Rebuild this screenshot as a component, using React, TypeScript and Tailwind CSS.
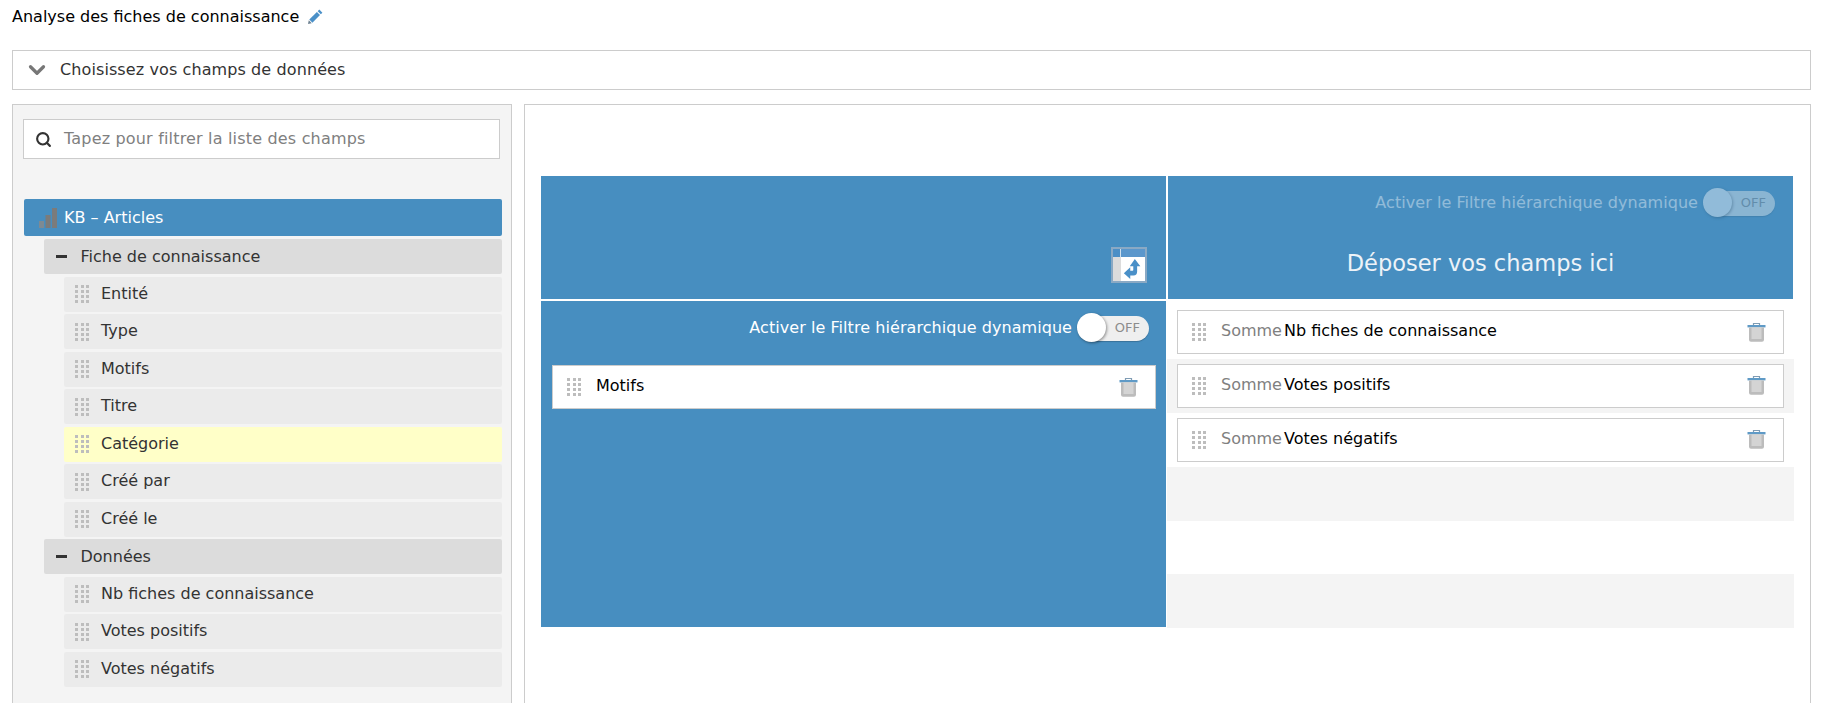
import { Search, ChevronDown } from "lucide-react";

const font = "font-['DejaVu_Sans',sans-serif]";

function Handle() {
  return (
    <div className="grid w-[14px] shrink-0 grid-cols-3 gap-x-[2.5px] gap-y-[2px]">
      {Array.from({ length: 12 }).map((_, i) => (
        <span key={i} className="h-[3px] w-[3px] bg-[#bdbdbd]" />
      ))}
    </div>
  );
}

function Trash() {
  return (
    <svg width="19" height="19" viewBox="0 0 19 19" className="shrink-0">
      <path d="M6.5 2.5V0.5h6v2" fill="none" stroke="#7f9cb4" strokeWidth="1.2" />
      <rect x="0.5" y="2" width="18" height="2.4" fill="#5f9ac6" />
      <path d="M2 4.4h15v12.4a2 2 0 0 1-2 2H4a2 2 0 0 1-2-2z" fill="#bcbcbc" />
      <rect x="4.5" y="4.4" width="10" height="11.6" fill="#d4d4d4" />
    </svg>
  );
}

function Toggle({ dim }: { dim?: boolean }) {
  return (
    <div className={`relative h-[25px] w-[71px] shrink-0 rounded-full bg-[#efefef] shadow-[0_1px_1px_rgba(0,0,0,0.2)] ${dim ? "opacity-40" : ""}`}>
      <span className="absolute right-[9px] top-[3px] text-[13px] leading-[18px] text-[#8c8c8c]">OFF</span>
      <span className="absolute -left-px -top-[3px] h-[29px] w-[29px] rounded-full bg-white shadow-[1px_1px_3px_rgba(0,0,0,0.4)]" />
    </div>
  );
}

function FilterSwitch({ dim }: { dim?: boolean }) {
  return (
    <div className="flex items-center justify-end gap-[6px]">
      <span className={`-mt-[2px] text-[16px] tracking-[0.06px] text-white ${dim ? "opacity-40" : ""}`}>Activer le Filtre hiérarchique dynamique</span>
      <Toggle dim={dim} />
    </div>
  );
}

function TreeItem({ label, highlight }: { label: string; highlight?: boolean }) {
  return (
    <div className={`mb-[2.5px] ml-[40px] flex h-[35px] items-center gap-[12px] rounded-[2px] pl-[11px] text-[16px] text-[#333] ${highlight ? "bg-[#ffffc8]" : "bg-[#ebebeb]"}`}>
      <Handle />
      <span className="-mt-px">{label}</span>
    </div>
  );
}

function TreeGroup({ label }: { label: string }) {
  return (
    <div className="mb-[2.5px] ml-[20px] flex h-[35px] items-center rounded-[2px] bg-[#dcdcdc] pl-[12px] text-[16px] text-[#333]">
      <span className="h-[3px] w-[11px] bg-[#333]" />
      <span className="ml-[13.5px]">{label}</span>
    </div>
  );
}

function Measure({ prefix, label }: { prefix?: string; label: string }) {
  return (
    <div className="flex h-[44px] items-center border border-[#ccc] bg-white pl-[14px] pr-[17px] text-[16px] text-black">
      <Handle />
      <span className="ml-[15px] -mt-[2px] flex-1">
        {prefix && <span className="mr-[2px] text-[#808080]">{prefix}</span>}
        {label}
      </span>
      <Trash />
    </div>
  );
}

function PivotIcon() {
  return (
    <div className="ml-auto flex h-[36px] w-[36px] flex-col border-2 border-[#8aa9c4] bg-white">
      <div className="flex h-[8px]">
        <span className="w-[7px] bg-[#4c8fc6]" />
        <span className="w-px bg-[#cfe0ee]" />
        <span className="flex-1 bg-[#5b97cc]" />
      </div>
      <div className="flex flex-1">
        <span className="w-[8px] bg-[#dcdcdc]" />
        <svg viewBox="0 0 24 24" className="flex-1 p-[1px]">
          <path d="M14 1l6 8h-3.5v6a4 4 0 0 1-4 4H9v4l-7-6.5L9 10v4h2.5a.8.8 0 0 0 .8-.8V9H8.500z" fill="#4a90c8" />
        </svg>
      </div>
    </div>
  );
}

const fields = ["Entité", "Type", "Motifs", "Titre", "Catégorie", "Créé par", "Créé le"];
const data = ["Nb fiches de connaissance", "Votes positifs", "Votes négatifs"];

export default function App() {
  return (
    <div className={`h-[703px] overflow-hidden bg-white pl-[12px] pr-[11px] ${font}`}>
      <div className="flex h-[50px] items-start pt-[5px] text-[16px] text-black">
        <span>Analyse des fiches de connaissance</span>
        <svg width="15" height="15" viewBox="0 0 15 15" className="ml-[9px] mt-[4px]">
          <path d="M11.3 0.6l3.1 3.1-1.6 1.6-3.1-3.1z" fill="#4a90c8" />
          <path d="M8.9 3l3.1 3.1L4.4 13.7l-3.1-3.1z" fill="#4a90c8" />
          <path d="M0.8 11.3l2.9 2.9-3.7.8z" fill="#6b7f8f" />
        </svg>
      </div>

      <div className="flex h-[40px] items-center border border-[#ccc] pl-[11px] text-[16px] text-[#333]">
        <ChevronDown size={26} strokeWidth={3} className="text-[#777]" />
        <span className="ml-[10px] tracking-[0.1px]">Choisissez vos champs de données</span>
      </div>

      <div className="mt-[14px] flex gap-[12px]">
        <div className="h-[620px] w-[500px] shrink-0 border border-[#ccc] bg-[#f4f4f4] pl-[11px] pr-[9px] pt-[14px]">
          <div className="-ml-px mr-[2px] flex h-[40px] items-center border border-[#ccc] bg-white pl-[11px] text-[16px] text-[#808080]">
            <Search size={17} strokeWidth={3} className="text-[#333]" />
            <span className="ml-[12px] -mt-px tracking-[0.18px]">Tapez pour filtrer la liste des champs</span>
          </div>
          <div className="mt-[40px] mb-[3px] flex h-[37px] items-center rounded-[2px] bg-[#478ec0] pl-[15px] text-[16px] text-white">
            <svg width="18" height="20" viewBox="0 0 18 20">
              <rect x="0" y="13" width="5" height="7" fill="#7d8a93" />
              <rect x="6.5" y="7" width="5" height="13" fill="#7b7b7b" />
              <rect x="13" y="0" width="5" height="20" fill="#7b7b7b" />
            </svg>
            <span className="ml-[7px]">KB – Articles</span>
          </div>
          <TreeGroup label="Fiche de connaissance" />
          {fields.map((f) => (
            <TreeItem key={f} label={f} highlight={f === "Catégorie"} />
          ))}
          <TreeGroup label="Données" />
          {data.map((f) => (
            <TreeItem key={f} label={f} />
          ))}
        </div>

        <div className="h-[620px] flex-1 border border-[#ccc] pl-[16px] pt-[71px]">
          <div className="grid grid-cols-[625px_625px] grid-rows-[123px_326px] gap-[2px]">
            <div className="flex items-end bg-[#478ec0] pb-[16px] pr-[19px]">
              <PivotIcon />
            </div>
            <div className="flex flex-col bg-[#478ec0] pr-[18px] pt-[15px]">
              <FilterSwitch dim />
              <div className="mt-[31px] -mr-[18px] text-center text-[22.5px] text-[#edf3f8]">Déposer vos champs ici</div>
            </div>
            <div className="bg-[#478ec0] pl-[11px] pr-[10px] pt-[15px]">
              <div className="pr-[7px]">
                <FilterSwitch />
              </div>
              <div className="mt-[24px]">
                <Measure label="Motifs" />
              </div>
            </div>
            <div className="-mx-px pt-[4.5px]">
              {[0, 1, 2, 3, 4, 5].map((i) => (
                <div key={i} className={`h-[53.75px] px-[10px] pt-[4.5px] ${i % 2 === 1 ? "bg-[#f4f4f4]" : ""}`}>
                  {data[i] && <Measure prefix="Somme" label={data[i]} />}
                </div>
              ))}
            </div>
          </div>
        </div>
      </div>
    </div>
  );
}
